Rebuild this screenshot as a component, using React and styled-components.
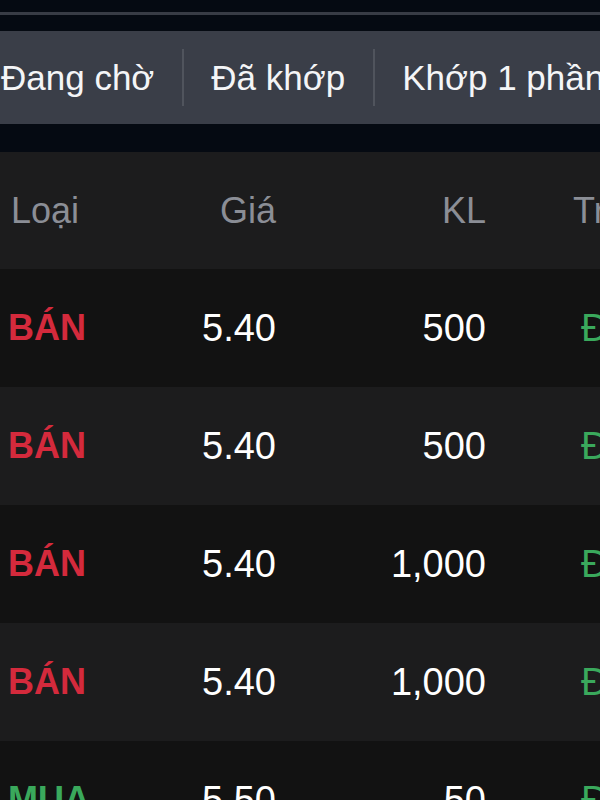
import React from "react";
import styled, { createGlobalStyle } from "styled-components";

const GlobalStyle = createGlobalStyle`
  html, body {
    margin: 0;
    padding: 0;
    background: #050a12;
    width: 600px;
    height: 800px;
    overflow: hidden;
    font-family: "Liberation Sans", Arial, sans-serif;
  }
`;

const Screen = styled.div`
  width: 600px;
  height: 800px;
  overflow: hidden;
  background: #050a12;
  display: flex;
  flex-direction: column;
`;

const TopLine = styled.div`
  height: 3px;
  margin-top: 12px;
  margin-bottom: 16px;
  background: #383c45;
  flex-shrink: 0;
`;

const TabBar = styled.div`
  height: 93px;
  background: #3a3e48;
  display: flex;
  align-items: center;
  white-space: nowrap;
  overflow: hidden;
  flex-shrink: 0;
`;

const Tab = styled.div`
  display: flex;
  align-items: center;
  height: 57px;
  padding: 0 28px 0 ${(p) => (p.$first ? "1px" : "27px")};
  border-left: ${(p) => (p.$first ? "none" : "2px solid #50545d")};
  color: #f4f5f7;
  font-size: 35px;
`;

const Spacer = styled.div`
  height: 28px;
  flex-shrink: 0;
`;

const Table = styled.div`
  display: flex;
  flex-direction: column;
  flex-shrink: 0;
`;

const Row = styled.div`
  display: flex;
  align-items: center;
  height: ${(p) => (p.$head ? "117px" : "118px")};
  background: ${(p) => (p.$alt ? "#1c1c1d" : "#121212")};
  white-space: nowrap;
  flex-shrink: 0;
`;

const Cell = styled.div`
  flex-shrink: 0;
  width: ${(p) => p.$w || "auto"};
  text-align: ${(p) => p.$align || "left"};
  padding-left: ${(p) => p.$pl || "0"};
  box-sizing: border-box;
  font-size: ${(p) => (p.$head ? "36px" : p.$bold ? "36px" : "38px")};
  color: ${(p) => p.$color || "#ffffff"};
  font-weight: ${(p) => (p.$bold ? 700 : 400)};
`;

const RED = "#d42a3c";
const GREEN = "#3aa95c";
const GRAY = "#8b8e96";

const orders = [
  { type: "BÁN", price: "5.40", vol: "500", status: "Đang chờ" },
  { type: "BÁN", price: "5.40", vol: "500", status: "Đang chờ" },
  { type: "BÁN", price: "5.40", vol: "1,000", status: "Đang chờ" },
  { type: "BÁN", price: "5.40", vol: "1,000", status: "Đang chờ" },
  { type: "MUA", price: "5.50", vol: "50", status: "Đang chờ" },
];

const App = () => {
  return (
    <Screen>
      <GlobalStyle />
      <TopLine />
      <TabBar>
        <Tab $first>Đang chờ</Tab>
        <Tab>Đã khớp</Tab>
        <Tab>Khớp 1 phần</Tab>
      </TabBar>
      <Spacer />
      <Table>
        <Row $head $alt>
          <Cell $head $w="188px" $pl="11px" $color={GRAY}>Loại</Cell>
          <Cell $head $w="88px" $align="right" $color={GRAY}>Giá</Cell>
          <Cell $head $w="210px" $align="right" $color={GRAY}>KL</Cell>
          <Cell $head $pl="87px" $color={GRAY}>Trạng thái</Cell>
        </Row>
        {orders.map((o, i) => (
          <Row key={i} $alt={i % 2 === 1}>
            <Cell $w="188px" $pl="8px" $bold $color={o.type === "BÁN" ? RED : GREEN}>
              {o.type}
            </Cell>
            <Cell $w="88px" $align="right">{o.price}</Cell>
            <Cell $w="210px" $align="right">{o.vol}</Cell>
            <Cell $pl="95px" $color={GREEN}>{o.status}</Cell>
          </Row>
        ))}
      </Table>
    </Screen>
  );
};

export default App;
